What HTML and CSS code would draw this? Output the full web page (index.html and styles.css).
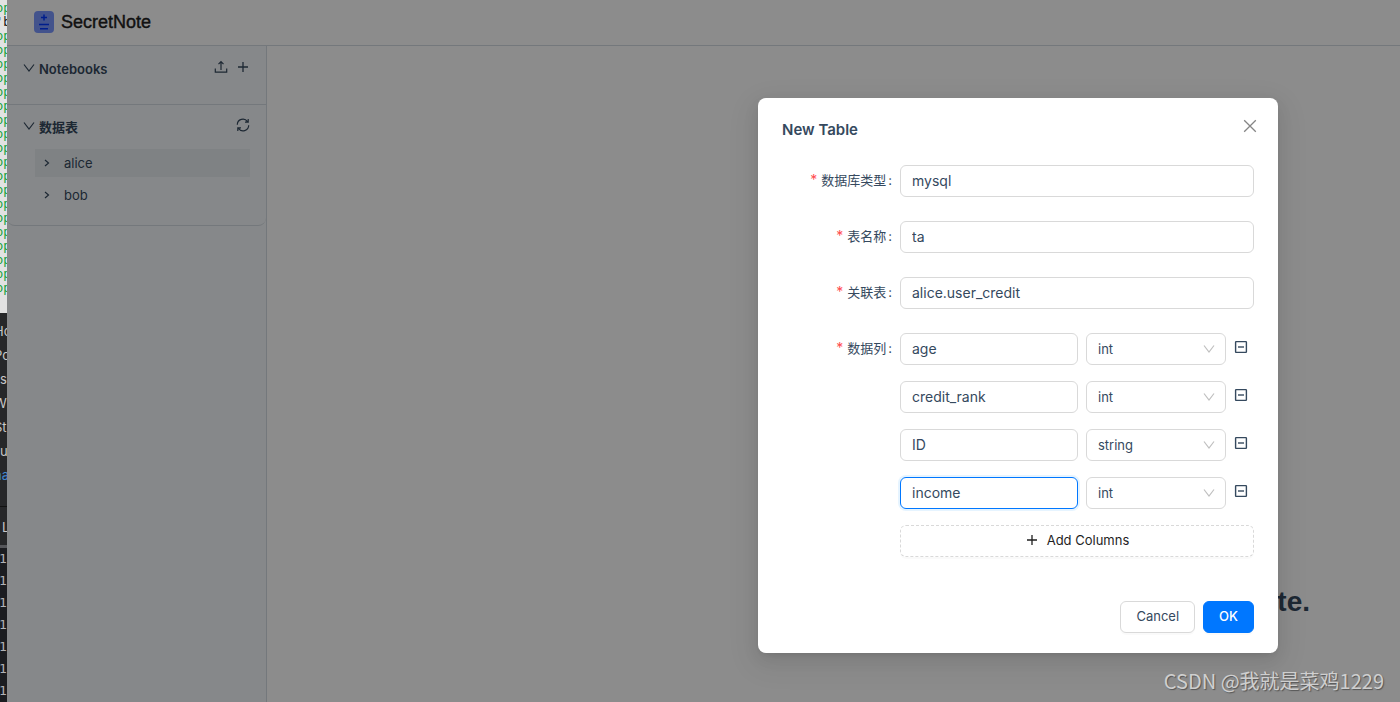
FILE: index.html
```
<!DOCTYPE html>
<html lang="zh-CN">
<head>
<meta charset="utf-8">
<title>SecretNote</title>
<link rel="stylesheet" href="styles.css">
</head>
<body>
<svg class="defs" aria-hidden="true">
  <symbol id="down" viewBox="0 0 12 12"><path d="M1 2.5 6 9 11 2.5" fill="none" stroke="currentColor" stroke-width="1.2"/></symbol>
  <symbol id="right" viewBox="0 0 12 12"><path d="M4 3 7.5 6 4 9" fill="none" stroke="currentColor" stroke-width="1.2"/></symbol>
  <symbol id="plus" viewBox="0 0 14 14"><path d="M7 2v10M2 7h10" fill="none" stroke="currentColor" stroke-width="1.3"/></symbol>
  <symbol id="minus-box" viewBox="0 0 14 14"><rect x="1.6" y="1.6" width="10.8" height="10.8" rx=".6" fill="none" stroke="currentColor" stroke-width="1.4"/><path d="M4 7h6" stroke="currentColor" stroke-width="1.4"/></symbol>
</svg>
<div class="screen">
  <aside class="backdrop">
    <div class="editor">
      <p>op</p><p class="plain">'b</p><p>op</p><p>op</p><p>op</p><p>op</p><p>op</p><p>op</p><p>op</p><p>op</p><p>op</p><p>op</p><p>op</p><p>op</p><p>op</p><p>op</p><p>op</p><p>op</p><p>op</p><p>op</p><p>op</p>
    </div>
    <div class="panel">
      <p>Ho</p><p>Po</p><p class="near">s</p><p>W</p><p>St</p><p class="near">u</p><p class="blue">na</p>
    </div>
    <div class="tab">L</div>
    <div class="terminal">
      <p>1</p><p>1</p><p>1</p><p>1</p><p>1</p><p>1</p><p>1</p>
    </div>
  </aside>
  <div class="app">
    <header class="header">
      <svg class="logo" viewBox="0 0 20 22"><rect width="20" height="22" rx="4" fill="#7b98ff"/><path d="M10 3.5v6M7 6.5h6M5 13.5h10M6 17.7h8" stroke="#0037ff" stroke-width="1.5" fill="none"/></svg>
      <h1>SecretNote</h1>
    </header>
    <div class="body">
      <nav class="sidebar">
        <section class="section notebooks">
          <div class="section-head">
            <svg class="fold"><use href="#down"/></svg>
            <h2>Notebooks</h2>
            <button class="icon-button" aria-label="Upload"><svg viewBox="0 0 14 14"><path d="M1.3 8.5v3.7h11.4V8.5M7 10V1.8M4.5 4.2 7 1.6l2.5 2.6" fill="none" stroke="currentColor" stroke-width="1.2"/></svg></button>
            <button class="icon-button" aria-label="Add notebook"><svg><use href="#plus"/></svg></button>
          </div>
        </section>
        <section class="section tables">
          <div class="section-head">
            <svg class="fold"><use href="#down"/></svg>
            <h2>数据表</h2>
            <button class="icon-button" aria-label="Refresh"><svg viewBox="0 0 14 14"><path d="M1.3 6.7A5.6 5.6 0 0 1 11.5 3.6M12.7 7.3A5.6 5.6 0 0 1 2.5 10.4M12.2 1v3.2H9M1.8 13V9.8H5" fill="none" stroke="currentColor" stroke-width="1.2"/></svg></button>
          </div>
          <ul class="tree">
            <li class="active"><svg><use href="#right"/></svg>alice</li>
            <li><svg><use href="#right"/></svg>bob</li>
          </ul>
        </section>
      </nav>
      <main class="welcome"><p>te.</p></main>
    </div>
    <div class="mask">
      <form class="modal" role="dialog" aria-labelledby="dialog-title">
        <div class="modal-head">
          <h2 id="dialog-title">New Table</h2>
          <button type="button" class="close" aria-label="Close"><svg viewBox="0 0 14 14"><path d="M1.2 1.2 12.8 12.8M12.8 1.2 1.2 12.8" stroke="currentColor" stroke-width="1.3"/></svg></button>
        </div>
        <div class="row"><label for="kind">数据库类型</label><input id="kind" type="text" value="mysql"></div>
        <div class="row"><label for="name">表名称</label><input id="name" type="text" value="ta"></div>
        <div class="row"><label for="link">关联表</label><input id="link" type="text" value="alice.user_credit"></div>
        <div class="row">
          <label for="col1">数据列</label>
          <div class="columns">
            <div class="column">
              <input id="col1" type="text" value="age">
              <div class="select"><select aria-label="Type 1"><option>int</option><option>string</option></select><svg><use href="#down"/></svg></div>
              <button type="button" class="remove" aria-label="Remove age"><svg><use href="#minus-box"/></svg></button>
            </div>
            <div class="column">
              <input type="text" aria-label="Column 2" value="credit_rank">
              <div class="select"><select aria-label="Type 2"><option>int</option><option>string</option></select><svg><use href="#down"/></svg></div>
              <button type="button" class="remove" aria-label="Remove credit_rank"><svg><use href="#minus-box"/></svg></button>
            </div>
            <div class="column">
              <input type="text" aria-label="Column 3" value="ID">
              <div class="select"><select aria-label="Type 3"><option>int</option><option selected>string</option></select><svg><use href="#down"/></svg></div>
              <button type="button" class="remove" aria-label="Remove ID"><svg><use href="#minus-box"/></svg></button>
            </div>
            <div class="column">
              <input class="focused" type="text" aria-label="Column 4" value="income">
              <div class="select"><select aria-label="Type 4"><option>int</option><option>string</option></select><svg><use href="#down"/></svg></div>
              <button type="button" class="remove" aria-label="Remove income"><svg><use href="#minus-box"/></svg></button>
            </div>
            <button type="button" class="button dashed"><svg><use href="#plus"/></svg>Add Columns</button>
          </div>
        </div>
        <div class="actions">
          <button type="button" class="button">Cancel</button>
          <button type="button" class="button primary">OK</button>
        </div>
      </form>
    </div>
  </div>
  <div class="watermark">CSDN @我就是菜鸡1229</div>
</div>
</body>
</html>
```
FILE: styles.css
```
* { box-sizing: border-box; }
body, h1, h2, p, ul { margin: 0; padding: 0; }
body {
  font-family: Inter, "Noto Sans CJK SC", sans-serif;
  font-size: 13px;
  line-height: 20px;
  color: #35495e;
}
button, input, select { font: inherit; color: inherit; margin: 0; }
button { padding: 0; border: 0; background: none; cursor: pointer; }
svg { display: block; flex: none; }
.defs { position: absolute; width: 0; height: 0; }

.screen { position: relative; display: flex; height: 100vh; overflow: hidden; }

/* windows behind the app */
.backdrop { width: 7px; flex: none; display: flex; flex-direction: column; overflow: hidden; white-space: nowrap; background: #1b1c20; }
.editor { height: 313px; flex: none; overflow: hidden; padding-top: 1px; background: #e2e2e2; color: #12a03c; font: 12px/14px "DejaVu Sans Mono", monospace; text-indent: -4px; }
.editor .plain { color: #111; }
.panel { height: 194px; flex: none; padding-top: 6px; background: #262729; border-bottom: 1px solid #111; color: #c8c8c8; font-size: 13px; line-height: 24px; text-indent: -6px; }
.panel .near { text-indent: 0; }
.panel .blue { color: #4187cf; }
.tab { height: 41px; flex: none; padding-left: 2px; background: #262729; border-bottom: 3px solid #55565a; color: #c8c8c8; line-height: 41px; }
.terminal { color: #b0b2b6; font: 13px/22px "DejaVu Sans Mono", monospace; text-indent: -1px; }

/* app */
.app { position: relative; flex: 1; min-width: 0; display: flex; flex-direction: column; background: #fff; }
.header { height: 46px; flex: none; display: flex; align-items: center; gap: 7px; padding: 0 27px 2px; border-bottom: 1px solid #d3dbe2; }
.logo { width: 20px; height: 22px; }
.header h1 { font-family: "Liberation Sans", sans-serif; font-size: 18px; font-weight: 400; line-height: 24px; color: #222; -webkit-text-stroke: 0.4px #222; }
.body { flex: 1; display: flex; min-height: 0; }
.sidebar { width: 260px; flex: none; background: #f5f8fb; border-right: 1px solid #d3dbe2; }
.section { padding: 13px 16px 0; border-bottom: 1px solid #d3dbe2; }
.notebooks { height: 59px; }
.tables { padding: 12px 16px 16px; border-radius: 0 0 8px 8px; }
.section-head { display: flex; align-items: flex-start; gap: 8px; }
.section-head h2 { flex: 1; margin-left: -4px; font-size: 13px; font-weight: 600; line-height: 20px; }
.fold { width: 12px; height: 18px; }
.icon-button { height: 16px; }
.icon-button svg { width: 14px; height: 14px; }
.tree { display: flex; flex-direction: column; gap: 4px; margin: 12px 0 0 12px; list-style: none; }
.tree li { display: flex; align-items: center; gap: 11px; height: 28px; padding-left: 6px; }
.tree .active { background: #e7edf0; }
.tree svg { width: 12px; height: 12px; }
.welcome { flex: 1; padding: 536px 90px 0 0; text-align: right; font-family: "Liberation Sans", sans-serif; font-size: 28px; font-weight: 700; line-height: 40px; }

/* dialog */
.mask { position: absolute; inset: 0; display: flex; align-items: flex-start; justify-content: flex-end; padding: 98px 122px 0 0; background: rgba(0, 0, 0, .45); }
.modal { width: 520px; display: flex; flex-direction: column; gap: 24px; padding: 20px 24px; border-radius: 8px; background: #fff; box-shadow: 0 6px 16px rgba(0, 0, 0, .08), 0 3px 6px -4px rgba(0, 0, 0, .12), 0 9px 28px 8px rgba(0, 0, 0, .05); }
.modal-head { display: flex; justify-content: space-between; height: 23px; }
.modal-head h2 { font-size: 15px; font-weight: 600; line-height: 24px; }
.close { width: 22px; height: 16px; margin-right: -7px; color: #858585; }
.close svg { width: 14px; height: 14px; margin: 0 auto; }
.row { display: grid; grid-template-columns: 1fr 3fr; }
.row > label { padding-right: 8px; text-align: right; line-height: 30px; }
.row > label::before { content: "*"; margin-right: 4px; font-size: 14px; color: #ff4d4f; }
.row > label::after { content: ":"; margin-left: 2px; }
input, select { width: 100%; height: 32px; padding: 0 11px; border: 1px solid #d9d9d9; border-radius: 6px; background: #fff; outline: none; }
input { padding-bottom: 2px; font-size: 14px; }
select { appearance: none; }
.focused { border-color: #0077ff; box-shadow: 0 0 0 2px rgba(5, 145, 255, .1); }
.columns { display: flex; flex-direction: column; gap: 16px; }
.column { display: grid; grid-template-columns: 1fr 140px 20px; gap: 8px; }
.select { display: grid; align-items: center; }
.select > * { grid-area: 1 / 1; }
.select svg { width: 12px; height: 12px; margin-right: 11px; justify-self: end; color: #bfbfbf; pointer-events: none; }
.remove { height: 28px; }
.remove svg { width: 14px; height: 14px; }
.button { height: 32px; padding: 0 15px 2px; border: 1px solid #d9d9d9; border-radius: 6px; background: #fff; box-shadow: 0 2px 0 rgba(0, 0, 0, .02); }
.dashed { display: flex; align-items: center; justify-content: center; gap: 8px; border-style: dashed; color: #1f1f1f; }
.dashed svg { width: 14px; height: 14px; }
.actions { display: flex; justify-content: flex-end; gap: 8px; padding-top: 20px; }
.primary { border-color: #0077ff; background: #0077ff; color: #fff; font-weight: 500; }

.watermark { position: absolute; right: 16px; bottom: 6px; font: 400 20px/30px "Noto Sans CJK SC", sans-serif; color: #cfcfcf; text-shadow: 1px 1px 1px #555; }
```
